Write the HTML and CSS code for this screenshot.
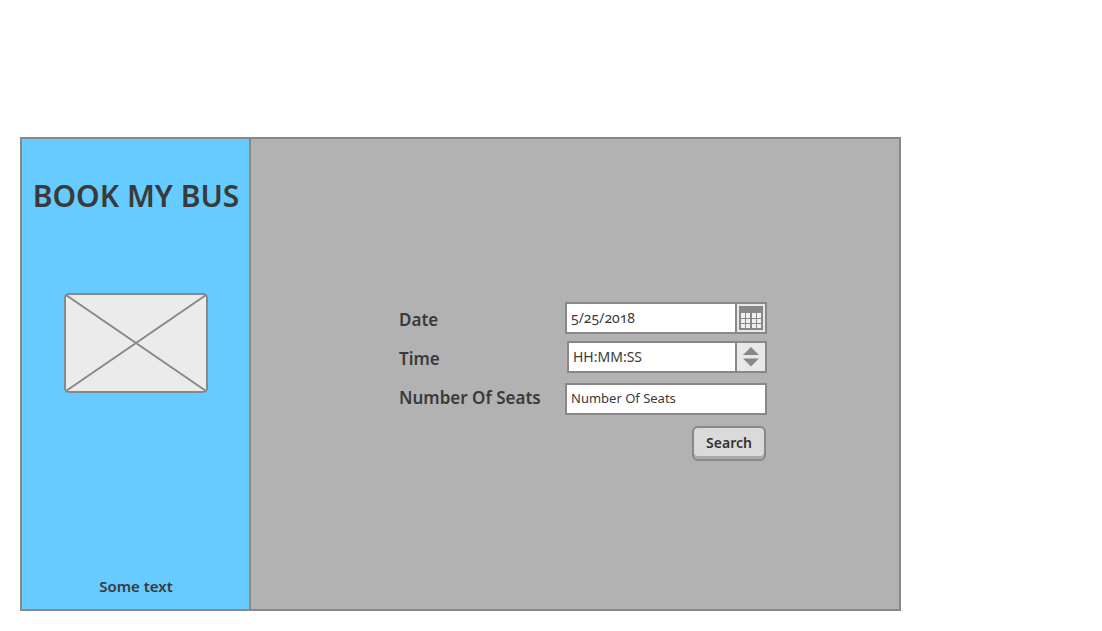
FILE: index.html
```html
<!DOCTYPE html>
<html lang="en">
<head>
<meta charset="utf-8">
<meta name="viewport" content="width=device-width, initial-scale=1">
<title>Book My Bus</title>
<link rel="stylesheet" href="styles.css">
</head>
<body>
<div class="window">
  <aside class="sidebar">
    <h1 class="title">BOOK MY BUS</h1>
    <svg class="placeholder" viewBox="0 0 144 100" role="img" aria-label="Image placeholder">
      <rect x="1" y="1" width="142" height="98" rx="4"/>
      <path d="M2 2L142 98M142 2L2 98"/>
    </svg>
    <p class="note">Some text</p>
  </aside>
  <main class="content">
    <form class="search-form">
      <div class="row">
        <label class="label" for="date">Date</label>
        <div class="field">
          <input class="input input-picker" id="date" type="text" value="5/25/2018">
          <button class="addon" type="button" aria-label="Open calendar">
            <svg class="icon" viewBox="0 0 28 28">
              <rect class="fill" x="2" y="2" width="24" height="24"/>
              <path class="cells" d="M4 9h4v5H4zM9 9h4v5H9zM15 9h4v5h-4zM20 9h4v5h-4zM4 15h4v4H4zM9 15h4v4H9zM15 15h4v4h-4zM20 15h4v4h-4zM4 20h4v4H4zM9 20h4v4H9zM15 20h4v4h-4zM20 20h4v4h-4z"/>
            </svg>
          </button>
        </div>
      </div>
      <div class="row">
        <label class="label" for="time">Time</label>
        <div class="field field-time">
          <input class="input input-picker" id="time" type="text" value="HH:MM:SS">
          <button class="addon" type="button" aria-label="Change time">
            <svg class="icon" viewBox="0 0 28 28">
              <path class="fill" d="M14 4L22 12H6zM6 15.500H22L14 23.500z"/>
            </svg>
          </button>
        </div>
      </div>
      <div class="row row-seats">
        <label class="label" for="seats">Number Of Seats</label>
        <div class="field">
          <input class="input" id="seats" type="text" value="Number Of Seats">
        </div>
      </div>
      <button class="search" type="submit">Search</button>
    </form>
  </main>
</div>
</body>
</html>
```
FILE: styles.css
```css
* {
  box-sizing: border-box;
}

body {
  margin: 0;
  min-height: 100vh;
  padding: 137px 201px 20px 20px;
  display: flex;
  background: #fff;
  color: #3a3a3a;
  font-family: "Noto Sans", "Open Sans", sans-serif;
}

.window {
  flex: 1;
  display: flex;
  border: 2px solid #888;
  background: #b2b2b2;
}

.sidebar {
  flex: none;
  width: 229px;
  display: flex;
  flex-direction: column;
  align-items: center;
  padding: 36px 10px 11px 11px;
  border-right: 2px solid #888;
  background: #66cbff;
}

.title {
  margin: 0;
  font-size: 30px;
  line-height: 42px;
  font-weight: 600;
  white-space: nowrap;
}

.placeholder {
  width: 144px;
  height: 100px;
  margin-top: 76px;
  fill: #ebebeb;
  stroke: #888;
  stroke-width: 2;
}

.note {
  margin: auto 0 0;
  font-size: 15px;
  line-height: 24px;
  font-weight: 600;
}

.content {
  flex: 1;
  display: flex;
  flex-direction: column;
  align-items: center;
  justify-content: center;
  padding: 15px 0 0 16px;
}

.search-form {
  width: 368px;
  display: flex;
  flex-direction: column;
  gap: 7px;
}

.row {
  display: flex;
  align-items: center;
}

.row-seats {
  margin-top: 3px;
}

.label {
  flex: none;
  width: 166px;
  padding-top: 4px;
  font-size: 17px;
  line-height: 24px;
  font-weight: 600;
  white-space: nowrap;
}

.row-seats .label {
  padding: 0 0 2px;
}

.field {
  flex: 1;
  min-width: 0;
  height: 32px;
  display: flex;
  border: 2px solid #888;
  background: #fff;
}

.field-time {
  margin-left: 2px;
}

.input {
  flex: 1;
  min-width: 0;
  border: 0;
  padding: 0 4px 2px;
  background: transparent;
  color: inherit;
  font: 13px "Noto Sans", "Open Sans", sans-serif;
}

.input-picker {
  font-size: 14px;
  font-variant-numeric: oldstyle-nums;
}

.addon {
  flex: none;
  width: 30px;
  padding: 0;
  border: 0;
  border-left: 2px solid #888;
  background: #e8e8e8;
}

.icon {
  display: block;
  width: 28px;
  height: 28px;
}

.fill {
  fill: #888;
}

.cells {
  fill: #f0f0f0;
}

.search {
  align-self: flex-end;
  width: 74px;
  height: 35px;
  margin: 4px 1px 0 0;
  padding: 0 0 2px;
  border: 2px solid #888;
  border-radius: 6px;
  background: #dadada;
  box-shadow: inset 0 -3px #aaa;
  color: #333;
  font: 600 14px "Noto Sans", "Open Sans", sans-serif;
}
```
